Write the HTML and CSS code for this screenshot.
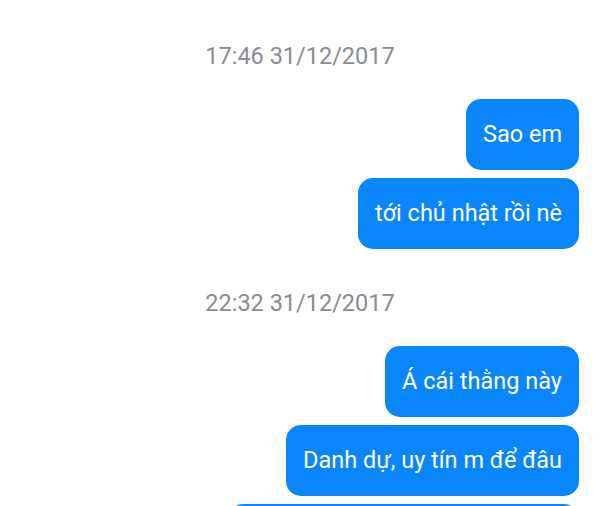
FILE: index.html
```html
<!DOCTYPE html>
<html lang="vi">
<head>
<meta charset="utf-8">
<link rel="stylesheet" href="styles.css">
</head>
<body>
<div class="chat">
  <div class="stamp">17:46 31/12/2017</div>
  <div class="group">
    <div class="bubble">Sao em</div>
    <div class="bubble">tới chủ nhật rồi nè</div>
  </div>
  <div class="stamp">22:32 31/12/2017</div>
  <div class="group">
    <div class="bubble">Á cái thằng này</div>
    <div class="bubble">Danh dự, uy tín m để đâu</div>
    <div class="bubble bubble-peek"></div>
  </div>
</div>
</body>
</html>
```
FILE: styles.css
```css
html, body {
  margin: 0;
  padding: 0;
  background: #ffffff;
  overflow: hidden;
  height: 506px;
}
.chat {
  width: 600px;
  padding-top: 41px;
  font-family: Roboto, "Noto Sans", sans-serif;
  display: flex;
  flex-direction: column;
}
.stamp {
  text-align: center;
  color: #8a8c92;
  font-size: 23.5px;
  line-height: 30px;
  margin-bottom: 28px;
}
.group {
  display: flex;
  flex-direction: column;
  align-items: flex-end;
  gap: 8px;
  padding-right: 21px;
  margin-bottom: 39px;
}
.bubble {
  background: #0a86fc;
  color: #ffffff;
  font-size: 23.5px;
  line-height: 27px;
  padding: 22px 17px;
  border-radius: 15px;
}
.bubble-peek {
  width: 317px;
  height: 27px;
}
```
